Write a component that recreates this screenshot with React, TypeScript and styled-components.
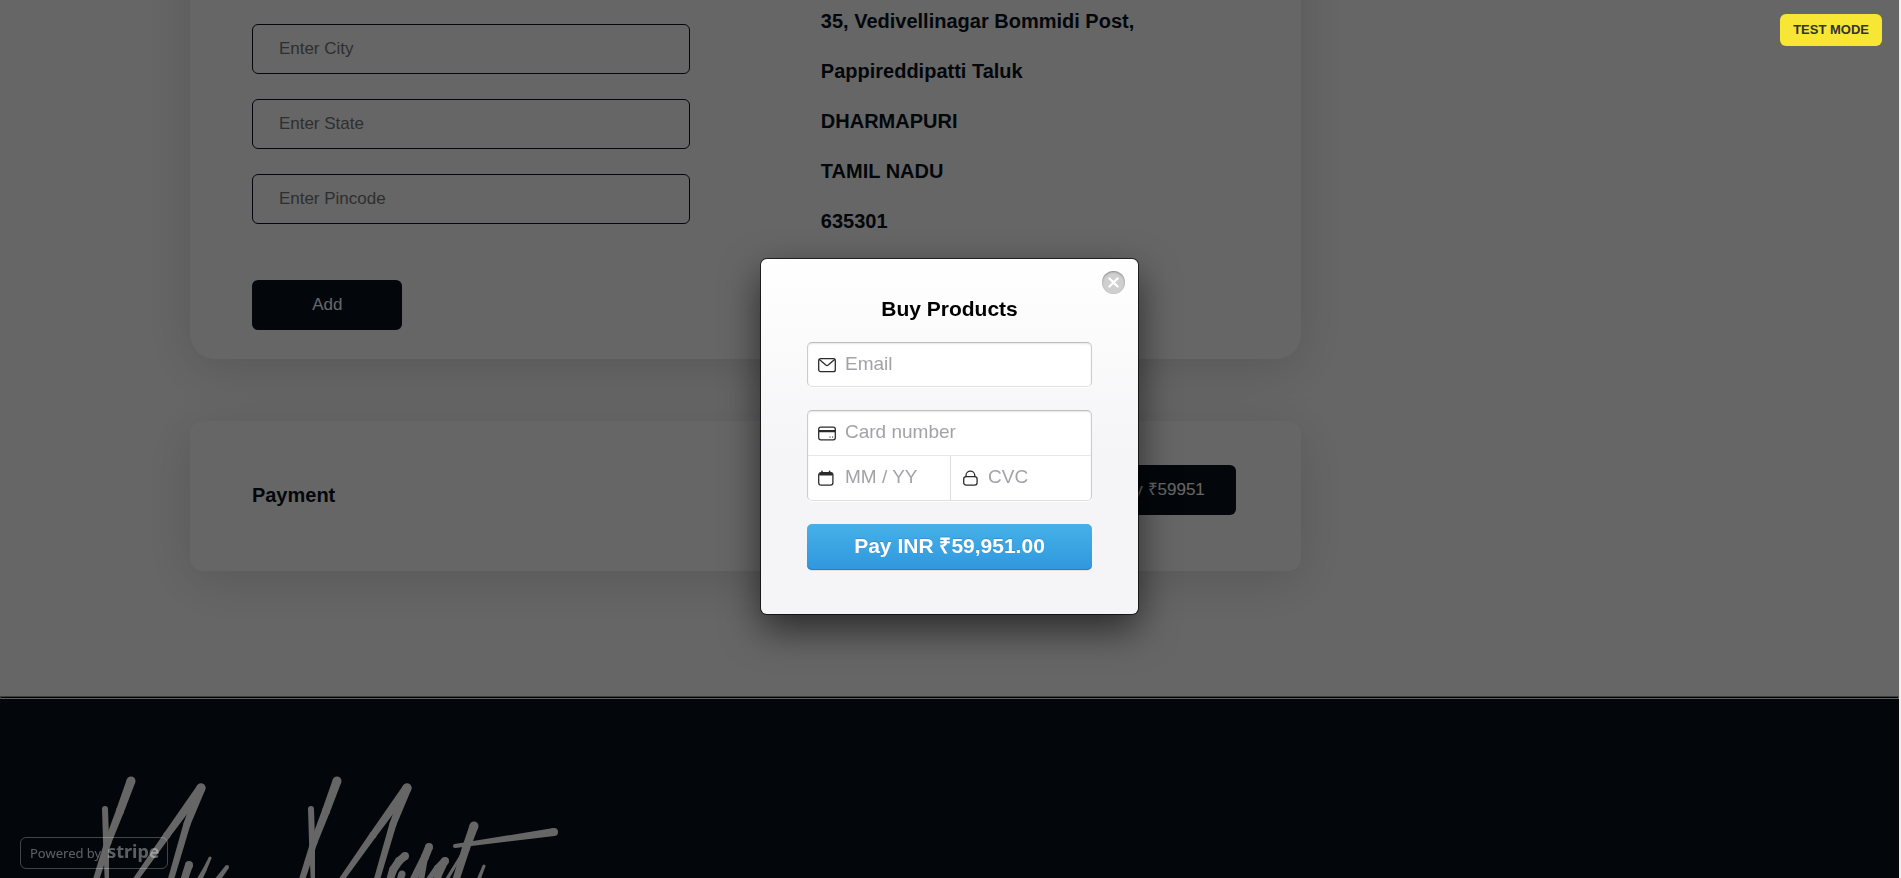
import React from "react";
import styled, { createGlobalStyle } from "styled-components";

const GlobalStyle = createGlobalStyle`
  *, *::before, *::after { box-sizing: border-box; }
  html, body { margin: 0; padding: 0; background: #fff; }
  body {
    overflow: hidden;
    font-family: "Liberation Sans", Arial, sans-serif;
    color: #08131c;
  }
  button, input { font-family: inherit; }
  p, h1, h2 { margin: 0; }
`;

const Page = styled.div`
  min-height: 100vh;
  display: flex;
  flex-direction: column;
  overflow: hidden;
  border-right: 2px solid #f1f1f1;
`;

const Main = styled.main`
  display: flex;
  flex-direction: column;
  gap: 62px;
  width: 58.5%;
  margin: -120px 0 125px 10%;
`;

const Card = styled.section<{ $radius: number }>`
  background: #fff;
  border-radius: ${(p) => p.$radius}px;
  box-shadow: 0 10px 50px rgba(0, 0, 0, 0.14);
`;

const AddressCard = styled(Card)`
  display: grid;
  grid-template-columns: 569fr 415fr;
  padding: 144px 65px 29px 62px;
`;

const PaymentCard = styled(Card)`
  display: flex;
  align-items: flex-start;
  justify-content: space-between;
  height: 150px;
  padding: 44px 65px 0 62px;
`;

const AddressForm = styled.form`
  display: flex;
  flex-direction: column;
  gap: 25px;
  margin-right: 131px;
`;

const PageInput = styled.input`
  width: 100%;
  height: 50px;
  padding: 0 26px;
  border: 1px solid #08131c;
  border-radius: 6px;
  background: transparent;
  font-size: 17px;
  outline: none;
  &::placeholder { color: #757575; opacity: 1; }
`;

const DarkButton = styled.button`
  height: 50px;
  min-width: 150px;
  padding: 0 31px 0 32px;
  border: 0;
  border-radius: 6px;
  background: #08131c;
  color: #fff;
  font-size: 17px;
  line-height: 20px;
`;

const AddButton = styled(DarkButton)`
  align-self: flex-start;
  margin-top: 31px;
`;

const Address = styled.address`
  display: flex;
  flex-direction: column;
  gap: 26px;
  margin-top: -15px;
  font-style: normal;
  font-size: 20px;
  line-height: 24px;
  font-weight: 700;
`;

const PaymentTitle = styled.h2`
  margin-top: 18px;
  font-size: 20px;
  line-height: 24px;
`;

const Divider = styled.hr`
  width: 100%;
  height: 3px;
  margin: 0;
  border: 1px solid;
  border-color: #9a9a9a #eee #eee #9a9a9a;
  background: #000;
`;

const Footer = styled.footer`
  flex: 1;
  padding: 71px 0 0 80px;
  overflow: hidden;
  background: #08131c;
`;

const Logo = styled.svg`
  display: block;
  fill: #fff;
`;

const Overlay = styled.div`
  position: fixed;
  inset: 0 2px 0 0;
  display: flex;
  align-items: center;
  justify-content: center;
  padding-bottom: 5px;
  background: rgba(0, 0, 0, 0.6);
`;

const TestBadge = styled.span`
  position: absolute;
  top: 14px;
  right: 17px;
  padding: 0 13px;
  border-radius: 6px;
  background: #f8e635;
  color: #333;
  font-size: 13px;
  line-height: 32px;
  font-weight: 700;
`;

const PoweredBy = styled.a`
  position: absolute;
  left: 20px;
  bottom: 9px;
  display: flex;
  align-items: center;
  gap: 6px;
  width: 148px;
  height: 32px;
  padding: 0 9px;
  border: 1px solid rgba(255, 255, 255, 0.25);
  border-radius: 6px;
  color: rgba(255, 255, 255, 0.36);
  font: 13px/30px "Noto Sans", sans-serif;
  text-decoration: none;
  white-space: nowrap;
`;

const StripeWord = styled.strong`
  font-size: 18px;
  line-height: 26px;
  padding-bottom: 4px;
`;

const Dialog = styled.form`
  position: relative;
  display: flex;
  flex-direction: column;
  gap: 23px;
  width: 377px;
  padding: 38px 46px 44px;
  border-radius: 6px;
  background: linear-gradient(#fff, #f5f5f7 55%);
  box-shadow: 0 0 0 1px rgba(0, 0, 0, 0.65), 0 15px 38px rgba(0, 0, 0, 0.6);
`;

const DialogTitle = styled.h1`
  margin-bottom: -2px;
  color: #000;
  font-size: 21px;
  line-height: 24px;
  text-align: center;
`;

const CloseButton = styled.button`
  position: absolute;
  top: 12px;
  right: 13px;
  width: 23px;
  height: 23px;
  padding: 0;
  display: grid;
  place-items: center;
  border: 0;
  border-radius: 50%;
  background: #cfcfcf;
  box-shadow: inset 0 1px 2px rgba(0, 0, 0, 0.35);
`;

const FieldGroup = styled.div`
  display: flex;
  flex-direction: column;
  overflow: hidden;
  border: 1px solid #ccc;
  border-top-color: #bdbdbd;
  border-bottom-color: #e0e0e0;
  border-radius: 5px;
  background: #fff;
  box-shadow: inset 0 1px 2px rgba(0, 0, 0, 0.1), 0 1px 0 #fff;
`;

const SplitRow = styled.div`
  display: grid;
  grid-template-columns: 143fr 140fr;
  border-top: 1px solid #e6e6e6;
`;

const Field = styled.label<{ $divided?: boolean; $height: number }>`
  display: flex;
  align-items: center;
  min-width: 0;
  height: ${(p) => p.$height}px;
  padding-left: 10px;
  border-right: ${(p) => (p.$divided ? "1px solid #dcdcdc" : "0")};
`;

const FieldIcon = styled.svg`
  flex: none;
  width: 18px;
  height: 18px;
  margin-right: 9px;
  fill: none;
  stroke: #2b2b2b;
  stroke-width: 1.3;
  stroke-linecap: round;
  stroke-linejoin: round;
`;

const FieldInput = styled.input`
  flex: 1;
  width: 0;
  min-width: 0;
  height: 100%;
  padding: 0 0 2px;
  border: 0;
  outline: none;
  background: transparent;
  color: #333;
  font-size: 19px;
  &::placeholder { color: #a2a2a8; opacity: 1; }
`;

const PayButton = styled.button`
  height: 46px;
  padding: 0 0 2px;
  border: 0;
  border-radius: 5px;
  background: linear-gradient(#45b1e8, #3097de);
  box-shadow: inset 0 -1px 0 #2a7fc4, 0 1px 0 rgba(0, 0, 0, 0.08);
  color: #fff;
  font-size: 21px;
  line-height: 24px;
  font-weight: 700;
  text-shadow: 0 -1px 0 rgba(46, 86, 153, 0.3);
`;

/* One pen stroke: each point is [x, y, pen width]. */
type Point = [number, number, number];

function Stroke({ points }: { points: Point[] }) {
  return (
    <>
      {points.map(([x, y, w], i) => {
        const next = points[i + 1];
        if (!next) return <circle key={i} cx={x} cy={y} r={w / 2} />;
        const [nx, ny, nw] = next;
        const len = Math.hypot(nx - x, ny - y);
        const px = (ny - y) / len / 2;
        const py = (x - nx) / len / 2;
        return (
          <g key={i}>
            <circle cx={x} cy={y} r={w / 2} />
            <polygon
              points={`${x + px * w},${y + py * w} ${x - px * w},${y - py * w} ${nx - px * nw},${ny - py * nw} ${nx + px * nw},${ny + py * nw}`}
            />
          </g>
        );
      })}
    </>
  );
}

const capital: Point[][] = [
  [[131, 781, 9], [120, 811, 8], [108, 842, 7], [94, 886, 6]],
  [[105, 809, 6], [106, 840, 6], [107, 886, 4]],
  [[201, 788, 9], [167, 835, 7], [131, 886, 5]],
  [[201, 788, 9], [187, 824, 7], [169, 886, 6]],
];

const firstWord: Point[][] = [
  [[189, 865, 8], [182, 886, 7]],
  [[210, 858, 3], [205, 869, 4], [196, 886, 6]],
  [[227, 867, 4], [213, 886, 6]],
];

const secondWord: Point[][] = [
  [[405, 856, 8], [399, 861, 8], [393, 870, 8], [388, 886, 7]],
  [[402, 874, 7], [398, 886, 7]],
  [[429, 847, 8], [425, 857, 8], [410, 886, 7]],
  [[426, 855, 5], [420, 886, 6]],
  [[445, 861, 8], [437, 868, 6], [424, 886, 5]],
  [[445, 861, 7], [438, 876, 7], [434, 886, 6]],
  [[474, 826, 9], [466, 848, 8], [454, 886, 7]],
  [[461, 856, 3], [453, 869, 3], [443, 886, 4]],
  [[455, 846, 4], [554, 832, 8]],
  [[484, 866, 3], [476, 886, 4]],
];

function BrandLogo() {
  return (
    <Logo width="500" height="108" viewBox="80 770 500 108" role="img" aria-label="Brand signature">
      {[...capital, ...firstWord].map((s, i) => <Stroke key={i} points={s} />)}
      <g transform="translate(206 0)">
        {capital.map((s, i) => <Stroke key={i} points={s} />)}
      </g>
      {secondWord.map((s, i) => <Stroke key={i} points={s} />)}
    </Logo>
  );
}

const MailIcon = () => (
  <FieldIcon viewBox="0 0 18 18" aria-hidden="true">
    <rect x="0.7" y="2.7" width="16.6" height="13" rx="2" />
    <path d="M1.4 3.5 L7.8 9.1 Q9 10.1 10.2 9.1 L16.6 3.5" />
  </FieldIcon>
);

const CardIcon = () => (
  <FieldIcon viewBox="0 0 18 18" aria-hidden="true">
    <rect x="0.7" y="3.2" width="16.6" height="12.6" rx="2" />
    <path d="M1 7.1 H17" strokeWidth="2.4" strokeLinecap="butt" />
    <path d="M11.8 13.1 h.4 M14.4 13.1 h.4" strokeWidth="1" />
  </FieldIcon>
);

const CalendarIcon = () => (
  <FieldIcon viewBox="0 0 18 18" aria-hidden="true">
    <rect x="0.7" y="3.7" width="14.2" height="12.4" rx="2.4" />
    <path d="M1.2 5.1 H14.4" strokeWidth="2.8" strokeLinecap="butt" />
    <path d="M4 2.4 V3.5 M11.6 2.4 V3.5" strokeWidth="1.6" />
  </FieldIcon>
);

const LockIcon = () => (
  <FieldIcon viewBox="0 0 18 18" aria-hidden="true">
    <rect x="2.7" y="7.7" width="13.4" height="8.4" rx="2.4" />
    <path d="M5 7.5 V6.5 A4.4 4.4 0 0 1 13.8 6.5 V7.5" />
  </FieldIcon>
);

export default function App() {
  const stop = (e: React.FormEvent) => e.preventDefault();
  return (
    <>
      <GlobalStyle />
      <Page>
        <Main>
          <AddressCard $radius={25}>
            <AddressForm onSubmit={stop}>
              <PageInput placeholder="Enter City" aria-label="City" />
              <PageInput placeholder="Enter State" aria-label="State" />
              <PageInput placeholder="Enter Pincode" aria-label="Pincode" />
              <AddButton type="submit">Add</AddButton>
            </AddressForm>
            <Address>
              <p>35, Vedivellinagar Bommidi Post,</p>
              <p>Pappireddipatti Taluk</p>
              <p>DHARMAPURI</p>
              <p>TAMIL NADU</p>
              <p>635301</p>
            </Address>
          </AddressCard>
          <PaymentCard $radius={13}>
            <PaymentTitle>Payment</PaymentTitle>
            <DarkButton type="button">Pay ₹59951</DarkButton>
          </PaymentCard>
        </Main>
        <Divider />
        <Footer>
          <BrandLogo />
        </Footer>
      </Page>
      <Overlay>
        <TestBadge>TEST MODE</TestBadge>
        <Dialog role="dialog" aria-labelledby="checkout-title" onSubmit={stop}>
          <CloseButton type="button" aria-label="Close">
            <svg width="11" height="11" viewBox="0 0 11 11" stroke="#fff" strokeWidth="2.4" strokeLinecap="round">
              <path d="M1.5 1.5 L9.5 9.5 M9.5 1.5 L1.5 9.5" />
            </svg>
          </CloseButton>
          <DialogTitle id="checkout-title">Buy Products</DialogTitle>
          <FieldGroup>
            <Field $height={43}>
              <MailIcon />
              <FieldInput type="email" placeholder="Email" aria-label="Email" />
            </Field>
          </FieldGroup>
          <FieldGroup>
            <Field $height={44}>
              <CardIcon />
              <FieldInput placeholder="Card number" aria-label="Card number" />
            </Field>
            <SplitRow>
              <Field $height={44} $divided>
                <CalendarIcon />
                <FieldInput placeholder="MM / YY" aria-label="Expiry date" />
              </Field>
              <Field $height={44}>
                <LockIcon />
                <FieldInput placeholder="CVC" aria-label="CVC" />
              </Field>
            </SplitRow>
          </FieldGroup>
          <PayButton type="submit">Pay INR ₹59,951.00</PayButton>
        </Dialog>
        <PoweredBy href="#stripe">
          Powered by <StripeWord>stripe</StripeWord>
        </PoweredBy>
      </Overlay>
    </>
  );
}
